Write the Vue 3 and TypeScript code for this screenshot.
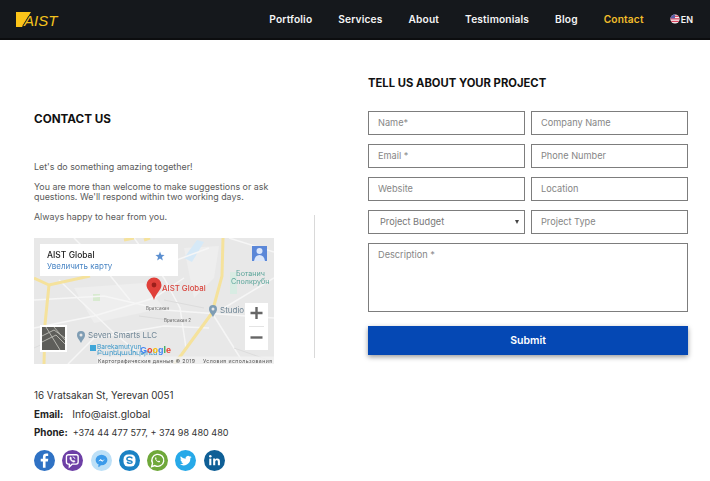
<script setup lang="ts">
const navItems = ['Portfolio', 'Services', 'About', 'Testimonials', 'Blog', 'Contact']
const rows: [string, string][] = [
  ['Name*', 'Company Name'],
  ['Email *', 'Phone Number'],
  ['Website', 'Location'],
]
</script>

<template>
  <div class="page">
    <header class="topbar">
      <a class="logo" aria-label="AIST">
        <svg class="logo-mark" width="16" height="16" viewBox="0 0 16 16"><polygon points="0,0 15,0 6,15 0,15" fill="#fcc419" /></svg>
        <span class="logo-text">AIST</span>
      </a>
      <nav class="nav">
        <a v-for="item in navItems" :key="item" :class="{ active: item === 'Contact' }">{{ item }}</a>
        <span class="lang">
          <svg width="10" height="10" viewBox="0 0 10 10">
            <defs><clipPath id="flagc"><circle cx="5" cy="5" r="4.6" /></clipPath></defs>
            <g clip-path="url(#flagc)">
              <rect width="10" height="10" fill="#f3f3f6" />
              <rect y="1.6" width="10" height="1.3" fill="#d9415a" />
              <rect y="4.2" width="10" height="1.3" fill="#d9415a" />
              <rect y="6.8" width="10" height="1.3" fill="#d9415a" />
              <rect width="5" height="4.4" fill="#5a5fa8" />
            </g>
          </svg>
          EN
        </span>
      </nav>
    </header>

    <main class="content">
      <section class="left">
        <h2 class="contact-title">CONTACT US</h2>
        <p class="intro">Let's do something amazing together!</p>
        <p>You are more than welcome to make suggestions or ask questions. We'll respond within two working days.</p>
        <p>Always happy to hear from you.</p>

        <div class="map">
          <svg width="240" height="126" viewBox="0 0 240 126">
            <rect width="240" height="126" fill="#e8e8e8" />
            <g fill="#eeeeee">
              <polygon points="40,50 110,45 130,70 60,85" />
              <polygon points="150,10 185,8 180,40 160,60" />
            </g>
            <polygon points="150,20 163,2 170,4 158,24" fill="#d6e9f7" />
            <rect x="59" y="56" width="7" height="7" fill="#d8ead0" />
            <rect x="196" y="34" width="7" height="22" fill="#d8ece3" />
            <g stroke="#f6f6f6" stroke-width="1.5" fill="none">
              <path d="M0 62 L70 58 L130 72 L240 80" />
              <path d="M25 42 L80 95 L118 126" />
              <path d="M0 90 L60 78 L120 60 L150 40" />
              <path d="M100 0 L130 40 L146 70 L152 110" />
              <path d="M40 0 L70 30 L96 62" />
              <path d="M190 70 L240 40" />
              <path d="M180 78 L210 126" />
              <path d="M34 126 L60 100 L130 88 L175 90" />
              <path d="M195 0 L240 14" />
              <path d="M105 36 L175 10" />
            </g>
            <g stroke="#f5e29c" stroke-width="3" fill="none">
              <path d="M189 0 L188 38 L178 75 L148 116 L140 126" />
              <path d="M0 40 L15 47 L56 38" />
              <path d="M15 47 L11 86 L10 126" />
              <path d="M90 2 L100 0" />
              <path d="M110 2 L116 0" />
            </g>
            <g stroke="#dcdcdc" stroke-width="1" fill="none">
              <path d="M0 110 L30 96" />
              <path d="M200 110 L240 124" />
              <path d="M130 62 L170 70" />
              <path d="M105 78 L150 84" />
            </g>

            <rect x="6" y="6" width="138" height="32" fill="#fff" />
            <text x="13" y="20" class="m-title">AIST Global</text>
            <text x="13" y="31" class="m-link">Увеличить карту</text>
            <polygon points="126,13.5 127.2,16.7 130.6,16.9 128,19.1 128.8,22.4 126,20.6 123.2,22.4 124,19.1 121.4,16.9 124.8,16.7" fill="#5b8fd0" />

            <rect x="218" y="8" width="15" height="15" fill="#5b87d8" />
            <circle cx="225.5" cy="13" r="3" fill="#dce7fa" />
            <path d="M220 23 Q221 17 225.5 17 Q230 17 231 23 Z" fill="#dce7fa" />

            <path d="M120 62 C118 55 112.5 52 112.5 47 A7.5 7.5 0 0 1 127.5 47 C127.5 52 122 55 120 62 Z" fill="#e0403a" />
            <circle cx="120" cy="47" r="2.4" fill="#9c1f1b" />
            <text x="128" y="53" class="m-red">AIST Global</text>

            <path d="M179 79 C177 75 175 74 175 71 A4 4 0 0 1 183 71 C183 74 181 75 179 79 Z" fill="#7f9db4" />
            <circle cx="179" cy="71" r="1.5" fill="#e8e8e8" />
            <text x="186" y="75" class="m-place">Studio</text>
            <path d="M47 105 C45 101 43 100 43 97 A4 4 0 0 1 51 97 C51 100 49 101 47 105 Z" fill="#7f9db4" />
            <circle cx="47" cy="97" r="1.5" fill="#e8e8e8" />
            <text x="54" y="100" class="m-place">Seven Smarts LLC</text>
            <text x="202" y="38" class="m-teal">Ботанич</text>
            <text x="197" y="46" class="m-teal">Сполкрубн</text>
            <text x="112" y="72" class="m-tiny">Вратсакан</text>
            <text x="130" y="84" class="m-tiny">Вратсакан 2</text>

            <rect x="56" y="107" width="6" height="6" fill="#3fa6d8" />
            <text x="63" y="111" class="m-metro">Barekamutyun</text>
            <text x="63" y="117" class="m-metro">Բարեկամություն</text>
            <text x="106" y="115" class="m-google"><tspan fill="#4285f4">G</tspan><tspan fill="#ea4335">o</tspan><tspan fill="#fbbc05">o</tspan><tspan fill="#4285f4">g</tspan><tspan fill="#34a853">l</tspan><tspan fill="#ea4335">e</tspan></text>

            <rect x="63" y="118.5" width="177" height="7.5" fill="#f1f1f1" opacity=".85" />
            <text x="64" y="124.5" class="m-fine" textLength="97" lengthAdjust="spacing">Картографические данные © 2019</text>
            <text x="169" y="124.5" class="m-fine" textLength="69" lengthAdjust="spacing">Условия использования</text>

            <rect x="6" y="87" width="27" height="27" fill="#fff" />
            <rect x="8" y="89" width="23" height="23" fill="#5e5e5a" />
            <path d="M8 98 L20 92 L31 100 M8 104 L22 97 L31 106 M12 89 L26 112 M20 89 L31 102" stroke="#b5b5ae" stroke-width="1" fill="none" />

            <rect x="211" y="65" width="23" height="47" fill="#fff" />
            <rect x="215" y="88" width="15" height="1" fill="#e4e4e4" />
            <path d="M222.5 69 V81 M216.5 75 H228.5" stroke="#666" stroke-width="2.4" />
            <path d="M216.5 99.5 H228.5" stroke="#666" stroke-width="2.4" />
          </svg>
        </div>

        <address class="details">
          <div>16 Vratsakan St, Yerevan 0051</div>
          <div><b>Email:</b><span class="val">Info@aist.global</span></div>
          <div><b>Phone:</b><span class="val phone">+374 44 477 577, + 374 98 480 480</span></div>
        </address>

        <div class="social">
          <a class="s-fb" aria-label="Facebook">
            <svg viewBox="0 0 20 20"><path d="M11 17V11h2.2l.4-2.6H11V6.9c0-.8.3-1.2 1.2-1.2h1.3V3.4c-.4 0-1.1-.1-1.8-.1-2 0-3.2 1.1-3.2 3.3v1.8H6.4V11h2.1v6z" fill="#fff" /></svg>
          </a>
          <a class="s-vb" aria-label="Viber">
            <svg viewBox="0 0 20 20"><path d="M6.2 4.5h7.2c1.2 0 2 .8 2 2v5c0 1.2-.8 2-2 2H9.6L7 16v-2.5h-.8c-1.2 0-2-.8-2-2v-5c0-1.2.8-2 2-2z" fill="none" stroke="#fff" stroke-width="1.3" /><path d="M7.6 7c.6-.6 1-.3 1.3.3.3.6.2.8-.2 1.2.3.8.9 1.4 1.8 1.8.4-.4.7-.5 1.2-.2.7.4.9.8.3 1.3-1.8 1.2-5.4-2.4-4.4-4.4zM10 6.4c1.4 0 2.4 1 2.4 2.4" fill="#fff" stroke="#fff" stroke-width=".4" /></svg>
          </a>
          <a class="s-ms" aria-label="Messenger">
            <svg viewBox="0 0 20 20"><ellipse cx="10" cy="9.6" rx="5.6" ry="5" fill="#3c9bea" /><path d="M7 14l0 2.4 2.6-1.6z" fill="#3c9bea" /><path d="M6.8 11l2.4-2.4 1.7 1.3 2.3-1.3-2.4 2.6-1.7-1.3z" fill="#fff" /></svg>
          </a>
          <a class="s-sk" aria-label="Skype">
            <svg viewBox="0 0 20 20"><rect x="4.3" y="4.3" width="11.4" height="11.4" rx="4.4" fill="#fff" /><path d="M12.7 8c-.4-.9-1.4-1.3-2.6-1.3-1.5 0-2.6.7-2.6 1.8 0 2.4 5 1.2 5 3 0 .7-.9 1.2-2.3 1.2-1.3 0-2.1-.5-2.5-1.4" fill="none" stroke="#1a82c4" stroke-width="1.3" /></svg>
          </a>
          <a class="s-wa" aria-label="WhatsApp">
            <svg viewBox="0 0 20 20"><path d="M4.4 15.8l.9-3.2a5.7 5.7 0 1 1 2.2 2.2z" fill="none" stroke="#fff" stroke-width="1.3" /><path d="M8 7.1c.5-.4.8 0 1 .6.2.5.1.6-.3 1 .4.9 1 1.5 1.9 1.9.4-.5.6-.5 1.1-.3.7.3 1 .6.6 1.1-1.5 1.4-5.6-2.3-4.3-4.3z" fill="#fff" /></svg>
          </a>
          <a class="s-tw" aria-label="Twitter">
            <svg viewBox="0 0 20 20"><path d="M15.8 6.6c-.4.2-.9.3-1.3.4.5-.3.8-.7 1-1.3-.4.3-.9.5-1.5.6a2.3 2.3 0 0 0-3.9 2.1 6.5 6.5 0 0 1-4.7-2.4 2.3 2.3 0 0 0 .7 3c-.4 0-.7-.1-1-.3 0 1.1.8 2.1 1.8 2.3-.3.1-.7.1-1 0 .3.9 1.1 1.6 2.1 1.6a4.6 4.6 0 0 1-3.4 1 6.5 6.5 0 0 0 10-5.8c.5-.3.9-.8 1.2-1.2z" fill="#fff" /></svg>
          </a>
          <a class="s-in" aria-label="LinkedIn">
            <svg viewBox="0 0 20 20"><rect x="5" y="8.2" width="2" height="6.3" fill="#fff" /><circle cx="6" cy="6" r="1.2" fill="#fff" /><path d="M8.7 8.2h1.9v.9c.4-.6 1.1-1.1 2.1-1.1 1.8 0 2.5 1.1 2.5 3v3.5h-2v-3.2c0-.9-.3-1.5-1.1-1.5-.9 0-1.4.6-1.4 1.6v3.1h-2z" fill="#fff" /></svg>
          </a>
        </div>
      </section>

      <div class="divider"></div>

      <section class="right">
        <h2 class="project-title">TELL US ABOUT YOUR PROJECT</h2>
        <form class="form" @submit.prevent>
          <template v-for="row in rows" :key="row[0]">
            <input class="field" :placeholder="row[0]" />
            <input class="field" :placeholder="row[1]" />
          </template>
          <div class="select-wrap">
            <select class="field select">
              <option>Project Budget</option>
            </select>
          </div>
          <input class="field" placeholder="Project Type" />
          <textarea class="field area" placeholder="Description *"></textarea>
          <button class="submit" type="submit">Submit</button>
        </form>
      </section>
    </main>
  </div>
</template>

<style>
html, body { margin: 0; background: #fff; overflow: hidden; }
</style>

<style scoped>
.page {
  width: 710px;
  height: 481px;
  overflow: hidden;
  font-family: Inter, "Open Sans", sans-serif;
  color: #555;
}
.topbar {
  box-sizing: border-box;
  height: 40px;
  background: #15181c;
  border-bottom: 2px solid #0c0d0f;
  display: flex;
  align-items: center;
  justify-content: space-between;
  padding: 0 17px 0 16px;
}
.logo { display: flex; align-items: center; height: 16px; margin-top: 1px; }
.logo-mark { display: block; }
.logo-text {
  margin: 2px 0 0 -8px;
  font: italic 400 15px/16px "Liberation Sans", sans-serif;
  color: #f3c21d;
  text-shadow: -1px 0 #15181c;
}
.nav {
  display: flex;
  align-items: center;
  gap: 26px;
  font-size: 10.2px;
  font-weight: 600;
  letter-spacing: 0.15px;
  color: #f4f4f4;
}
.nav a.active { color: #f2bd2b; }
.lang { display: flex; align-items: center; gap: 1px; font-size: 9px; letter-spacing: 0; }
.content {
  display: grid;
  grid-template-columns: 240px 41px 320px;
  padding-left: 34px;
}
.left { grid-column: 1; padding-top: 72px; font-size: 8.9px; line-height: 10px; }
.divider {
  grid-column: 2;
  width: 1px;
  height: 143px;
  margin: 175px 0 0 40px;
  background: #d9d9d9;
}
.right { grid-column: 3; margin-left: 53px; padding-top: 36px; }
.contact-title, .project-title {
  margin: 0;
  font-size: 11.7px;
  line-height: 14px;
  font-weight: 700;
  color: #111;
}
.project-title { font-size: 11.25px; }
.left p { margin: 10px 0 0; color: #5a5a5a; }
.left p.intro { margin-top: 36px; }
.map { width: 240px; height: 126px; margin-top: 16px; }
.map svg { display: block; filter: blur(0.3px); }
.m-title { font: 500 8.5px Inter, sans-serif; fill: #222; }
.m-link { font: 400 8px Inter, sans-serif; fill: #4a86c5; }
.m-red { font: 500 7.8px Inter, sans-serif; fill: #d8443c; }
.m-place { font: 400 8px Inter, sans-serif; fill: #6f8696; }
.m-teal { font: 400 7.2px Inter, sans-serif; fill: #5ba59a; }
.m-tiny { font: 400 4.5px Inter, sans-serif; fill: #666; }
.m-metro { font: 400 6.5px Inter, sans-serif; fill: #3a97c9; }
.m-google { font: 700 9px "Liberation Sans", sans-serif; }
.m-fine { font: 400 5.2px Inter, sans-serif; fill: #555; }
.details {
  margin-top: 23px;
  font-style: normal;
  font-size: 9.8px;
  line-height: 18px;
  color: #333;
}
.details b { font-weight: 700; color: #222; }
.val { margin-left: 9px; font-size: 10.3px; }
.val.phone { margin-left: 5px; font-size: 9.1px; }
.social { display: flex; gap: 7.3px; margin-top: 8px; }
.social a {
  width: 21px;
  height: 21px;
  border-radius: 50%;
  display: block;
}
.s-fb { background: #2f72c4; }
.s-vb { background: #6d3fa6; }
.s-ms { background: #bde0f7; }
.s-sk { background: #1a82c4; }
.s-wa { background: #6fa83a; }
.s-tw { background: #27a9e8; }
.s-in { background: #0f5f96; }
.social svg { display: block; width: 21px; height: 21px; }
.form {
  display: grid;
  grid-template-columns: 157px 157px;
  column-gap: 6px;
  row-gap: 9px;
  margin-top: 21px;
}
.field {
  box-sizing: border-box;
  width: 100%;
  height: 24px;
  margin: 0;
  padding: 0 9px 2px;
  border: 1px solid #7d7d7d;
  border-radius: 0;
  background: #fff;
  font-family: inherit;
  font-size: 9.2px;
  color: #777;
  outline: none;
  display: block;
}
.field::placeholder { color: #868686; opacity: 1; }
.select-wrap { position: relative; }
.select-wrap::after {
  content: "";
  position: absolute;
  right: 6px;
  top: 10px;
  border-left: 2.5px solid transparent;
  border-right: 2.5px solid transparent;
  border-top: 4px solid #444;
}
.select { appearance: none; padding-left: 11px; }
.area { grid-column: 1 / 3; height: 69px; padding-top: 5px; resize: none; }
.submit {
  grid-column: 1 / 3;
  height: 29px;
  margin-top: 5px;
  border: 0;
  background: #0548b4;
  color: #fff;
  font-family: inherit;
  font-size: 10.5px;
  font-weight: 600;
  box-shadow: 0 2px 5px rgba(0, 0, 0, 0.4);
}
</style>
